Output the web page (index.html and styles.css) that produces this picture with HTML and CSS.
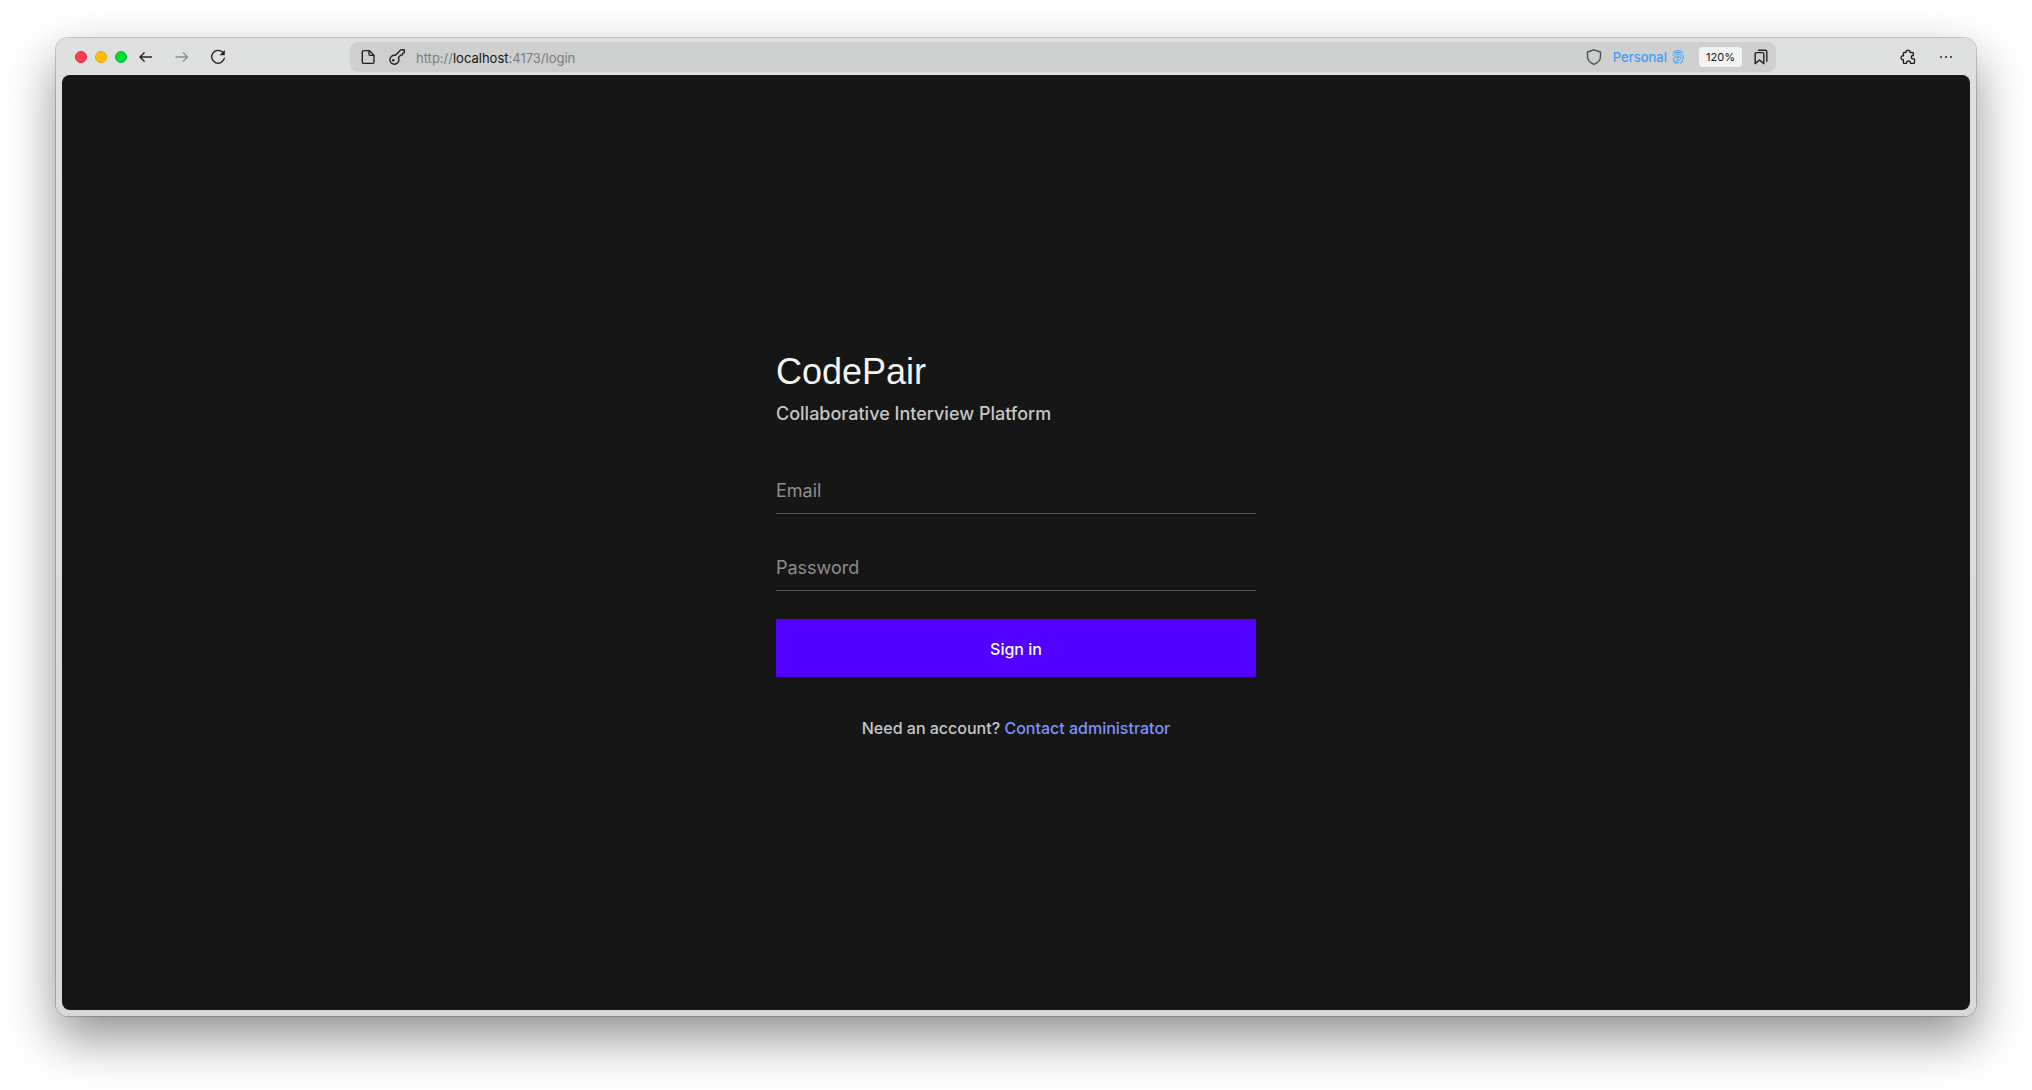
FILE: index.html
```html
<!DOCTYPE html>
<html lang="en">
<head>
<meta charset="utf-8">
<meta name="viewport" content="width=device-width, initial-scale=1">
<title>CodePair</title>
<link rel="stylesheet" href="styles.css">
</head>
<body>
<div class="window">
  <header class="toolbar">
    <div class="controls">
      <div class="lights">
        <button class="light light-close" aria-label="Close"></button>
        <button class="light light-minimize" aria-label="Minimize"></button>
        <button class="light light-zoom" aria-label="Zoom"></button>
      </div>
      <nav class="history">
        <button class="tool" aria-label="Back"><svg class="icon" viewBox="0 0 16 16"><path d="M13.500 8H2M6.200 3.800 2 8l4.200 4.200"/></svg></button>
        <button class="tool tool-off" aria-label="Forward"><svg class="icon" viewBox="0 0 16 16"><path d="M2 8h11.500M9.300 3.800 13.500 8l-4.200 4.200"/></svg></button>
        <button class="tool" aria-label="Reload"><svg class="icon" viewBox="0 0 16 16"><path d="M12.700 3.300A6.400 6.400 0 1 0 14.300 9.300"/><path class="solid" d="M14.800 1v5.200H9.600z"/></svg></button>
      </nav>
    </div>
    <div class="address">
      <button class="mini" aria-label="Site information"><svg class="icon" viewBox="0 0 16 16"><path d="M4 1.600h5.200L14 6.200v6.500a1.700 1.700 0 0 1-1.700 1.700H4a1.700 1.700 0 0 1-1.700-1.700V3.300A1.700 1.700 0 0 1 4 1.600zM9 1.700v3.400a1.300 1.300 0 0 0 1.300 1.300H14"/></svg></button>
      <button class="mini" aria-label="Saved passwords"><svg class="icon" viewBox="0 0 16 16"><path d="M6.400 6.300 11.700.9 15.200.6 15.400 3.600 13.700 4.100 13.400 5.900 11.500 6.200 9.400 8.600a4.500 4.500 0 1 1-3-2.300z"/><circle class="solid" cx="4.300" cy="11.200" r="1.200"/></svg></button>
      <span class="url">http://<span class="host">localhost</span>:4173/login</span>
      <button class="mini mini-soft" aria-label="Tracking protection"><svg class="icon" viewBox="0 0 16 16"><path d="M8 .8 14.500 3v4.300c0 3.700-2.600 6.600-6.500 8-3.900-1.400-6.500-4.300-6.500-8V3z"/></svg></button>
      <span class="profile">Personal
        <svg class="print" viewBox="0 0 12 14"><path d="M1 2.600C3.500.2 8 .1 10.800 2.200M.8 5.800c.8-4.400 9-4.700 10.300-.2.600 2.500-.2 4.700-1.800 6M1 8.300c.6 2.800 2.800 4.500 5.600 4.300M3 8.500C2.200 3 8.600 2.600 9 6.500c.3 3.700-3.400 5.100-5.100 3.300M5.200 8.300C4.300 5.400 7 5.200 7 6.900c0 1.200-.9 1.800-1.800 1.400M1.200 11.300c1 1.200 2 1.900 3.400 2.200M11 11c-.7 1.200-1.700 2-3 2.400"/></svg>
      </span>
      <button class="zoom">120%</button>
      <button class="mini" aria-label="Bookmarks"><svg class="icon" viewBox="0 0 16 16"><path d="M3.200 3.600h6.600a1 1 0 0 1 1 1v10L6.500 11l-4.300 3.600v-10a1 1 0 0 1 1-1zM5.500 1.200h6.700A1.600 1.600 0 0 1 13.800 2.800v9.400"/></svg></button>
    </div>
    <div class="extras">
      <button class="tool" aria-label="Extensions"><svg class="icon" viewBox="0 0 16 16"><path d="M4.200 3.500H6c-.5-3.200 4.500-3.200 4 0h2.500a.8.800 0 0 1 .8.800v2.200c-1.500 0-2 .8-2 1.700s.6 1.700 2 1.700h1.200v3.700a.8.800 0 0 1-.8.800h-3.200c.2-3.200-4.200-3.200-4 0H4.200a.8.800 0 0 1-.8-.8v-2.900c-3.200.4-3.200-4.300 0-3.900V4.300a.8.800 0 0 1 .8-.8z"/></svg></button>
      <button class="tool" aria-label="Menu"><svg class="icon" viewBox="0 0 16 16"><g class="solid"><circle cx="3" cy="8" r="1"/><circle cx="8" cy="8" r="1"/><circle cx="13" cy="8" r="1"/></g></svg></button>
    </div>
  </header>
  <main class="page">
    <form class="login">
      <h1 class="title">CodePair</h1>
      <p class="subtitle">Collaborative Interview Platform</p>
      <div class="fields">
        <input class="field" type="email" placeholder="Email" aria-label="Email">
        <input class="field" type="password" placeholder="Password" aria-label="Password">
      </div>
      <button class="submit" type="submit">Sign in</button>
      <p class="help">Need an account? <a class="link" href="#contact">Contact administrator</a></p>
    </form>
  </main>
</div>
</body>
</html>
```
FILE: styles.css
```css
* { box-sizing: border-box; }

body {
  margin: 0;
  min-height: 100vh;
  display: flex;
  padding: 38px 56px 74px;
  background: #fff;
  font-family: Inter, "Liberation Sans", sans-serif;
}

button {
  padding: 0;
  border: 0;
  background: none;
  color: inherit;
  font-family: inherit;
}

/* Browser frame */
.window {
  flex: 1;
  display: flex;
  flex-direction: column;
  padding: 0 6px 6px;
  border-radius: 12px;
  background: linear-gradient(#dfe1e0, #d6d9d8);
  box-shadow: 0 0 0 1px #00000030, 0 22px 50px #00000070;
}

.toolbar {
  display: grid;
  grid-template-columns: 288px 1fr 194px;
  align-items: center;
  height: 37px;
  color: #222;
}

.controls, .lights, .history, .extras, .address, .profile {
  display: flex;
  align-items: center;
}

.controls { padding-left: 13px; gap: 1px; }
.lights { gap: 8px; }

.light {
  width: 12px;
  height: 12px;
  border-radius: 50%;
}
.light-close { background: #ff3b50; border: 1px solid #e8283f; }
.light-minimize { background: #ffbe00; border: 1px solid #e3a50c; }
.light-zoom { background: #00d936; border: 1px solid #0dbb31; }

.tool {
  display: grid;
  place-items: center;
  width: 36px;
  height: 30px;
}
.tool-off { color: #8e9090; }

.icon {
  width: 16px;
  height: 16px;
  fill: none;
  stroke: currentColor;
  stroke-width: 1.4;
  stroke-linecap: round;
  stroke-linejoin: round;
}
.solid { fill: currentColor; stroke: none; }

.address {
  height: 30px;
  padding: 0 5px 0 8px;
  gap: 9px;
  border-radius: 8px;
  background: #cdd0cf;
}
.mini {
  display: grid;
  place-items: center;
  width: 20px;
  height: 20px;
}
.mini-soft { color: #505252; }

.url {
  flex: 1;
  padding-top: 2px;
  font-size: 13px;
  line-height: 20px;
  color: #7b7d7d;
}
.host { color: #151515; }

.profile {
  gap: 5px;
  padding-top: 1px;
  margin-right: 6px;
  font-size: 13px;
  font-weight: 500;
  line-height: 20px;
  color: #429cf8;
}
.print {
  width: 12px;
  height: 14px;
  fill: none;
  stroke: currentColor;
  stroke-width: 1;
}

.zoom {
  width: 43px;
  height: 20px;
  border-radius: 4px;
  background: #f1f2f4;
  font-size: 11px;
  color: #151515;
}

.extras { justify-content: flex-end; gap: 2px; padding-right: 6px; }

/* Sign-in page */
.page {
  flex: 1;
  display: grid;
  place-items: center;
  border-radius: 8px;
  background: #161616;
  color: #c6c6c6;
}

.login {
  display: flex;
  flex-direction: column;
  width: 100%;
  max-width: 480px;
}

.title {
  margin: 0 0 4px;
  padding-top: 2px;
  font-family: "Liberation Sans", Arial, sans-serif;
  font-size: 36px;
  font-weight: 400;
  line-height: 48px;
  color: #f4f4f4;
}

.subtitle {
  margin: 0 0 28px;
  font-size: 18px;
  font-weight: 500;
  line-height: 28px;
}

.fields {
  display: grid;
  gap: 19px;
  margin-bottom: 28px;
}

.field {
  width: 100%;
  height: 58px;
  padding: 12px 0 0;
  border: 0;
  border-bottom: 1px solid #525252;
  border-radius: 0;
  outline: 0;
  background: transparent;
  color: #f4f4f4;
  font-family: inherit;
  font-size: 18px;
}
.field::placeholder { color: #8d8d8d; opacity: 1; }

.submit {
  height: 58px;
  padding-top: 2px;
  margin-bottom: 40px;
  background: #5200ff;
  color: #fff;
  font-size: 16px;
  font-weight: 500;
}

.help {
  margin: 0;
  font-size: 16px;
  font-weight: 500;
  line-height: 22px;
  text-align: center;
}
.link { color: #7b93ff; text-decoration: none; }
```
